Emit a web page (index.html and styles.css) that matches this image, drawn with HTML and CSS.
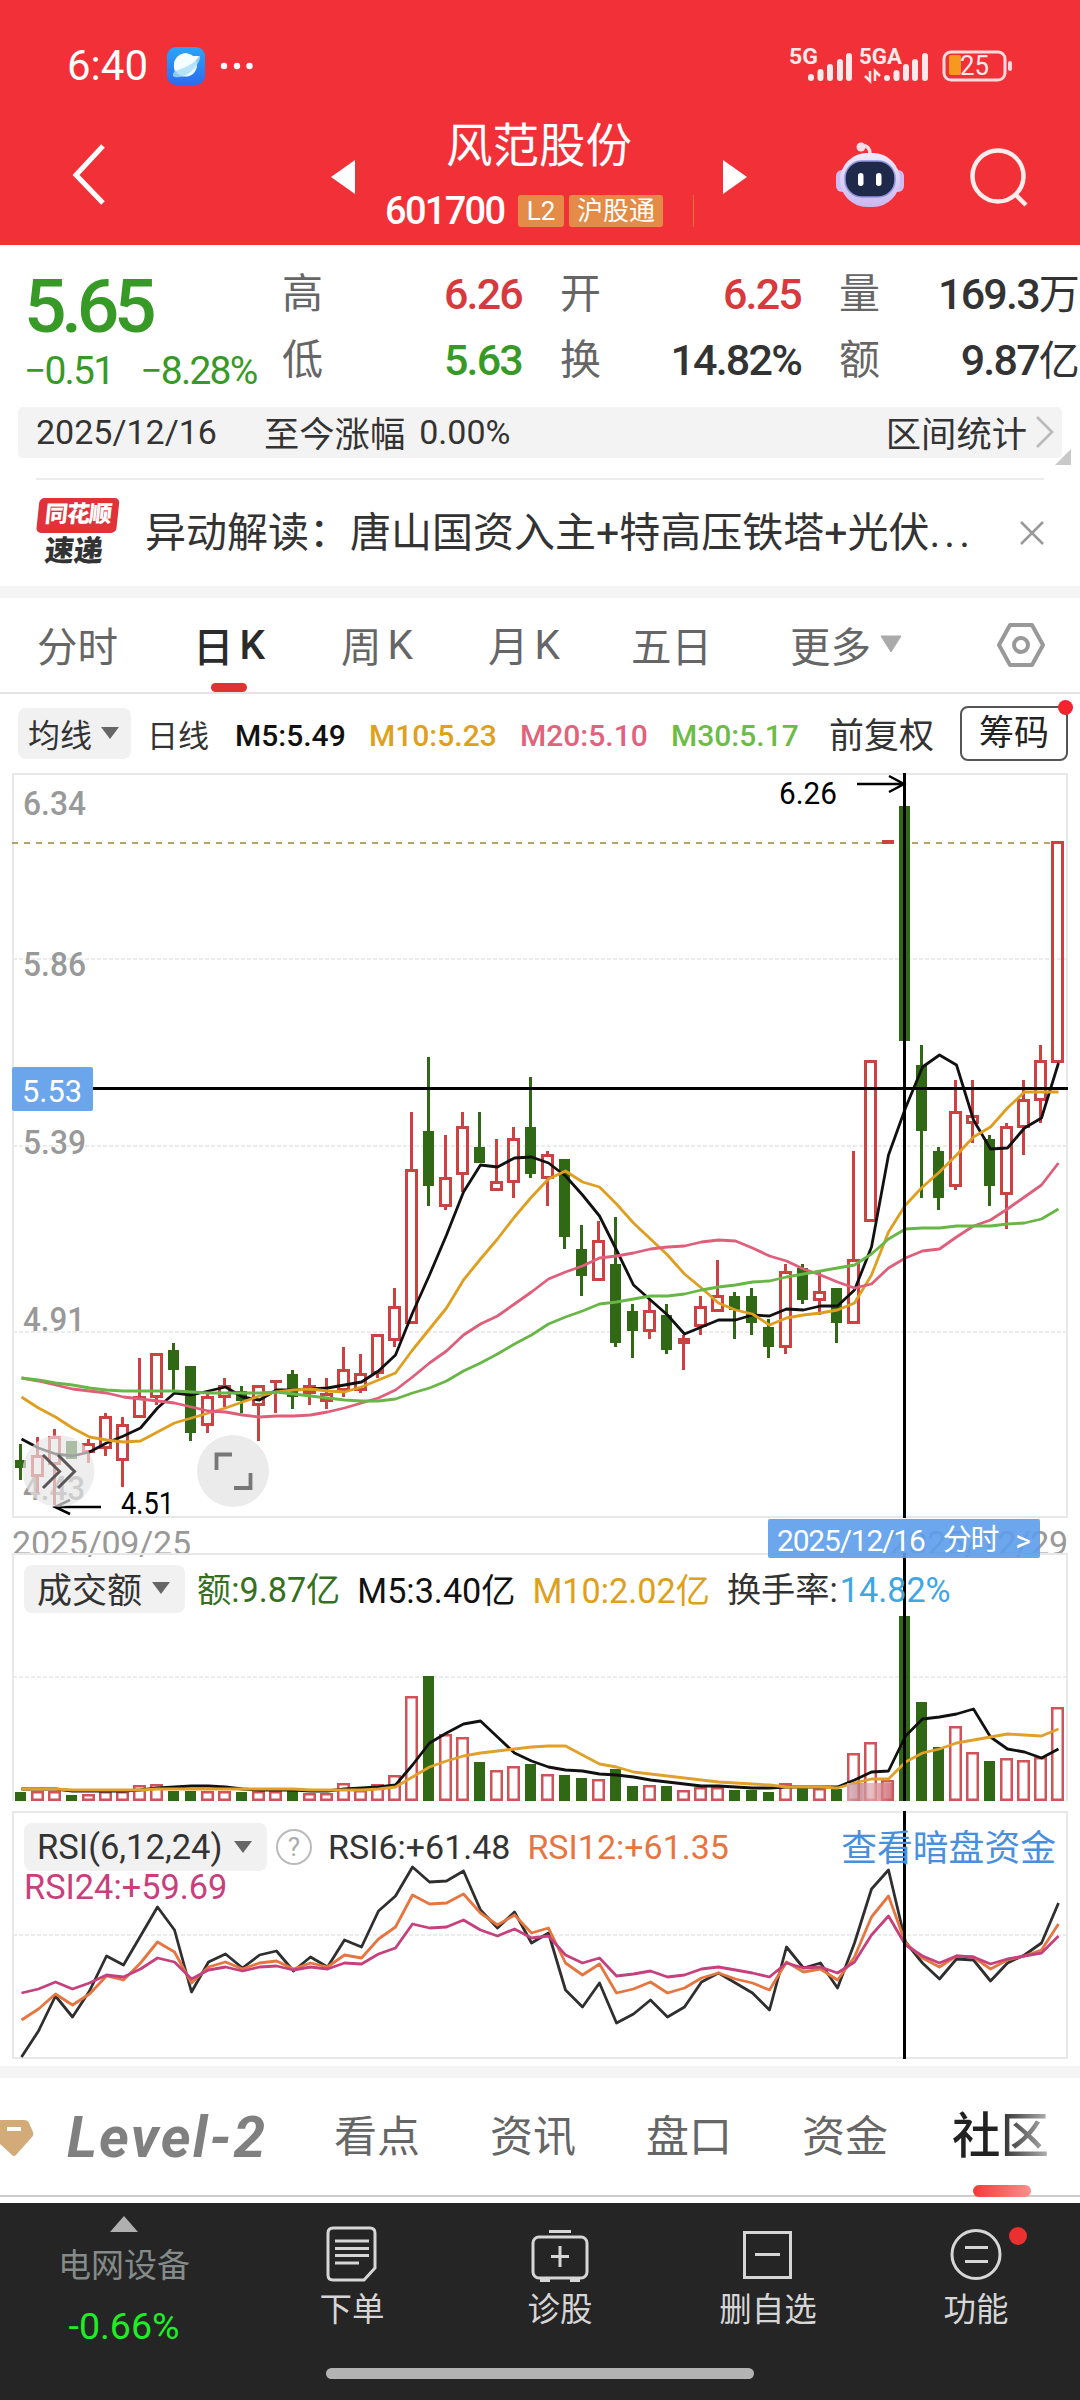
FILE: index.html
```html
<!DOCTYPE html>
<html lang="zh-CN">
<head>
    <meta charset="UTF-8">
    <meta name="viewport" content="width=device-width, initial-scale=1.0">
    <title>风范股份 601700</title>
    <link rel="stylesheet" href="styles.css">
</head>
<body>
<div class="app">
    <header class="header">
        <div class="status">
            <span class="clock">6:40</span>
            <svg class="browser-icon" width="38" height="38" viewBox="0 0 38 38">
                <defs>
                    <linearGradient id="sky" x1="0" y1="0" x2="0" y2="1">
                        <stop offset="0" stop-color="#2aa5f7"/>
                        <stop offset="1" stop-color="#2c6cf0"/>
                    </linearGradient>
                </defs>
                <rect width="38" height="38" rx="9" fill="url(#sky)"/>
                <circle cx="18.5" cy="18" r="11.5" fill="#e9fbff"/>
                <path d="M6 29C4 22 27 8 33 9C34 13 28 22 21 27C15 31 8 31 6 29Z" fill="#a9dcfb" opacity=".8"/>
                <path d="M9 12C12 6 20 4 26 9L32 9C30 14 20 21 8 24C6 20 7 15 9 12Z" fill="#f4feff"/>
            </svg>
            <svg class="dots" width="34" height="8" viewBox="0 0 34 8" fill="#fff">
                <circle cx="4" cy="4" r="3.2"/><circle cx="17" cy="4" r="3.2"/><circle cx="29.5" cy="4" r="3.2"/>
            </svg>
            <svg class="signals" width="226" height="42" viewBox="788 44 226 42">
                <text x="789" y="63" class="net" textLength="29" lengthAdjust="spacingAndGlyphs">5G</text>
                <text x="859" y="63" class="net" textLength="43" lengthAdjust="spacingAndGlyphs">5GA</text>
                <g stroke="#ffe9ea" stroke-width="6" stroke-linecap="round">
                    <path d="M811 76V77M820.5 71V77M830 66V77M840 61V77M849 55V77"/>
                    <path d="M887 77V77M896.5 72V77M906 66V77M915 61V77M925 55V77"/>
                </g>
                <path d="M870 70V80L865 75M875 80V70L880 75" fill="none" stroke="#ffe9ea" stroke-width="2.5"/>
                <rect x="944" y="51" width="61" height="28" rx="7" fill="none" stroke="#ffd9dc" stroke-width="3"/>
                <rect x="949" y="54" width="12" height="20" rx="2" fill="#f59a1f"/>
                <rect x="1008" y="60" width="4" height="10" rx="2" fill="#ffd9dc"/>
                <text x="960" y="74" class="battery" textLength="29" lengthAdjust="spacingAndGlyphs">25</text>
            </svg>
        </div>
        <div class="nav">
            <svg class="back" width="40" height="66" viewBox="0 0 40 66"><path d="M35 4L8 33L35 61" fill="none" stroke="#fff" stroke-width="5"/></svg>
            <svg class="prev" width="24" height="34" viewBox="0 0 24 34"><path d="M24 0V34L0 17Z" fill="#fff"/></svg>
            <div class="title">
                <h1>风范股份</h1>
                <div class="code">
                    <span class="num">601700</span>
                    <span class="badge">L2</span>
                    <span class="badge badge-wide">沪股通</span>
                    <i class="code-line"></i>
                </div>
            </div>
            <svg class="next" width="24" height="34" viewBox="0 0 24 34"><path d="M0 0V34L24 17Z" fill="#fff"/></svg>
            <svg class="robot" width="68" height="66" viewBox="0 0 68 66">
                <defs>
                    <linearGradient id="shell" x1="0" y1="0" x2="0" y2="1">
                        <stop offset="0" stop-color="#f3e9fb"/>
                        <stop offset="1" stop-color="#c9b8f0"/>
                    </linearGradient>
                </defs>
                <path d="M25 4C32 3 34 7 34 12" fill="none" stroke="#f6d9e6" stroke-width="3.5"/>
                <circle cx="25" cy="5" r="4.5" fill="#fbdbe4"/>
                <rect x="0" y="28" width="12" height="22" rx="6" fill="#cdbdf5"/>
                <rect x="56" y="28" width="12" height="22" rx="6" fill="#cdbdf5"/>
                <rect x="4" y="11" width="60" height="54" rx="27" fill="url(#shell)"/>
                <rect x="9" y="19" width="50" height="36" rx="17" fill="#1f2a4a" stroke="#8d94dd" stroke-width="1.5"/>
                <rect x="22" y="31" width="5.5" height="13" rx="2.7" fill="#fff"/>
                <rect x="40" y="31" width="5.5" height="13" rx="2.7" fill="#fff"/>
            </svg>
            <svg class="search" width="60" height="60" viewBox="0 0 60 60" fill="none" stroke="#ffecec" stroke-width="4.5"><circle cx="28" cy="28" r="25.5"/><path d="M45 46L56 57"/></svg>
        </div>
    </header>

    <section class="quote">
        <div class="price-box">
            <div class="price">5.65</div>
            <div class="change"><span>−0.51</span><span>−8.28%</span></div>
        </div>
        <dl class="stats">
            <dt>高</dt><dd class="up">6.26</dd>
            <dt>开</dt><dd class="up">6.25</dd>
            <dt>量</dt><dd>169.3<b>万</b></dd>
            <dt>低</dt><dd class="down">5.63</dd>
            <dt>换</dt><dd>14.82%</dd>
            <dt>额</dt><dd>9.87<b>亿</b></dd>
        </dl>
    </section>

    <div class="range">
        <span class="range-date">2025/12/16</span>
        <span class="range-name">至今涨幅</span>
        <span class="range-value">0.00%</span>
        <span class="range-link">区间统计</span>
        <svg width="22" height="34" viewBox="0 0 22 34"><path d="M4 2L19 17L4 32" fill="none" stroke="#b9b9b9" stroke-width="2.5"/></svg>
        <i class="corner"></i>
    </div>

    <div class="news">
        <div class="news-logo">
            <span class="logo-top">同花顺</span>
            <span class="logo-bottom">速递</span>
        </div>
        <p>异动解读：唐山国资入主+特高压铁塔+光伏<span class="more">...</span></p>
        <svg width="24" height="24" viewBox="0 0 24 24"><path d="M1 1L23 23M23 1L1 23" stroke="#999" stroke-width="2.5"/></svg>
    </div>

    <nav class="periods">
        <span>分时</span>
        <span class="active">日<em>K</em></span>
        <span>周<em>K</em></span>
        <span>月<em>K</em></span>
        <span>五日</span>
        <span>更多<svg width="22" height="18" viewBox="0 0 22 18"><path d="M1 1H21L11 17Z" fill="#aaa" stroke="#aaa" stroke-linejoin="round"/></svg></span>
        <svg class="setting" width="48" height="46" viewBox="0 0 48 46" fill="none" stroke="#999" stroke-width="4" stroke-linejoin="round"><path d="M13 3H35L46 23L35 43H13L2 23Z"/><circle cx="24" cy="23" r="7"/></svg>
    </nav>

    <div class="ma-row">
        <span class="pill">均线<i class="arrow"></i></span>
        <span class="ma-name">日线</span>
        <span class="ma5">M5:5.49</span>
        <span class="ma10">M10:5.23</span>
        <span class="ma20">M20:5.10</span>
        <span class="ma30">M30:5.17</span>
        <span class="adjust">前复权</span>
        <button class="chips">筹码</button>
    </div>

    <section class="panel price-panel">
        <svg id="priceChart" width="1080" height="746" viewBox="0 773 1080 746"></svg>
    </section>

    <div class="dates">
        <span>2025/09/25</span>
        <span>2025/12/29</span>
        <div class="date-tip"><span>2025/12/16</span><span class="tip-name">分时</span><span class="tip-more">&gt;</span></div>
    </div>

    <section class="panel">
        <svg id="volumeChart" width="1080" height="258" viewBox="0 1553 1080 258"></svg>
        <div class="legend legend-volume">
            <span class="pill">成交额<i class="arrow"></i></span>
            <span class="vol">额:9.87亿</span>
            <span class="ma5">M5:3.40亿</span>
            <span class="ma10">M10:2.02亿</span>
            <span class="turnover">换手率:<b>14.82%</b></span>
        </div>
    </section>

    <section class="panel">
        <svg id="rsiChart" width="1080" height="249" viewBox="0 1811 1080 249"></svg>
        <div class="legend legend-rsi">
            <span class="pill">RSI(6,12,24)<i class="arrow"></i></span>
            <span class="help">?</span>
            <span class="rsi6">RSI6:+61.48</span>
            <span class="rsi12">RSI12:+61.35</span>
            <a class="dark-pool">查看暗盘资金</a>
        </div>
        <span class="rsi24">RSI24:+59.69</span>
    </section>

    <nav class="tabs">
        <svg width="34" height="38" viewBox="0 0 34 38"><path d="M-12 1H24Q28 1 29 4L33 13Q34 16 32 18L16 36Q14 38 12 36L-12 14Z" fill="#d3ab78"/><path d="M7 10H21" stroke="#fff" stroke-width="4"/></svg>
        <span class="level2">Level-2</span>
        <span>看点</span>
        <span>资讯</span>
        <span>盘口</span>
        <span>资金</span>
        <span class="current">社区</span>
    </nav>

    <footer class="toolbar">
        <div class="sector">
            <svg width="28" height="16" viewBox="0 0 28 16"><path d="M14 0L28 16H0Z" fill="#b0b0b0"/></svg>
            <span class="sector-name">电网设备</span>
            <span class="sector-change">-0.66%</span>
        </div>
        <div class="tool">
            <svg width="60" height="60" viewBox="0 0 60 60"><path d="M11 4H48Q53 4 53 9V44L42 56H11Q6 56 6 51V9Q6 4 11 4Z"/><path d="M13 17H47M13 24.5H47M13 31.5H47M13 39H37"/></svg>
            <span>下单</span>
        </div>
        <div class="tool">
            <svg width="60" height="60" viewBox="0 0 60 60"><rect x="3" y="13" width="54" height="41" rx="6"/><path d="M19 7.5H41M30 22V43M21 32.5H39M10 56.5H20M40 56.5H50"/></svg>
            <span>诊股</span>
        </div>
        <div class="tool">
            <svg width="60" height="60" viewBox="0 0 60 60"><rect x="6.5" y="8.5" width="46" height="45"/><path d="M17 30.5H42"/></svg>
            <span>删自选</span>
        </div>
        <div class="tool">
            <svg width="60" height="60" viewBox="0 0 60 60"><circle cx="30" cy="30.5" r="24"/><path d="M19 23.5H42M19 37.5H42"/></svg>
            <span>功能</span>
            <i class="red-dot"></i>
        </div>
        <i class="home-bar"></i>
    </footer>
</div>
<script src="chart.js"></script>
</body>
</html>
```

FILE: styles.css
```css
* {
    box-sizing: border-box;
}

body {
    margin: 0;
    background: #fff;
    font-family: Roboto, "Noto Sans CJK SC", sans-serif;
    color: #333;
}

.app {
    width: 1080px;
    height: 2400px;
    overflow: hidden;
    background: #fff;
}

span, dd, dt, p {
    white-space: nowrap;
}

svg {
    display: block;
    flex: none;
}

/* header */
.header {
    height: 245px;
    background: #f13038;
    color: #fff;
}

.status {
    display: flex;
    align-items: center;
    height: 110px;
    padding: 22px 66px 0 67px;
}

.clock {
    width: 100px;
    font-size: 42px;
    line-height: 44px;
}

.dots {
    margin-left: 15px;
}

.signals {
    margin-left: auto;
}

.net {
    font-size: 22px;
    font-weight: 700;
    fill: #ffe9ea;
}

.battery {
    font-size: 27px;
    fill: #ffe9ea;
}

.nav {
    display: grid;
    grid-template-columns: 331px 24px 368px 24px 89px 134px 110px;
    height: 135px;
}

.back {
    margin: 32px 0 0 68px;
}

.prev, .next {
    margin-top: 50px;
}

.title {
    text-align: center;
}

h1 {
    margin: 10px 0 0 0;
    font-size: 46.5px;
    line-height: 52px;
    font-weight: 400;
}

.code {
    display: flex;
    align-items: center;
    height: 32px;
    margin: 23px 0 0 30px;
}

.num {
    width: 133px;
    text-align: left;
    font-size: 38px;
    font-weight: 500;
    letter-spacing: -1.7px;
}

.badge {
    width: 46px;
    height: 32px;
    margin-right: 5px;
    border-radius: 3px;
    background: #e38b47;
    font-size: 26px;
    line-height: 32px;
}

.badge-wide {
    width: 94px;
}

.code-line {
    width: 1px;
    height: 32px;
    margin-left: 25px;
    background: #e3703f;
}

.robot {
    grid-column: 6;
    margin-top: 32px;
}

.search {
    margin-top: 38px;
}

/* quote */
.quote {
    display: grid;
    grid-template-columns: 282px 798px;
    height: 162px;
}

.price-box {
    padding: 19px 0 0 24px;
    color: #379a26;
}

.price {
    height: 84px;
    font-size: 75px;
    line-height: 84px;
    font-weight: 500;
    letter-spacing: -5.4px;
}

.change {
    display: flex;
    gap: 27px;
    margin-top: 1px;
    font-size: 39px;
    line-height: 44px;
    letter-spacing: -1.8px;
}

.stats {
    display: grid;
    grid-template-columns: 60px 180px 38px 60px 181px 38px 60px 179px;
    grid-template-rows: 66px 66px;
    align-items: center;
    margin: 16px 0 0 0;
    font-size: 43px;
}

.stats dt {
    color: #666;
    font-size: 41px;
    line-height: 66px;
}

.stats dt:nth-of-type(2), .stats dt:nth-of-type(5) {
    grid-column: 4;
}

.stats dt:nth-of-type(3), .stats dt:nth-of-type(6) {
    grid-column: 7;
}

.stats dd {
    margin: 0;
    text-align: right;
    font-weight: 500;
    line-height: 66px;
    letter-spacing: -1.8px;
}

.stats b {
    font-size: 41px;
    font-weight: 400;
}

.up {
    color: #d8393c;
}

.down {
    color: #379a26;
}

.range {
    position: relative;
    display: flex;
    align-items: center;
    height: 51px;
    margin: 0 18px;
    padding: 0 0 2px 18px;
    border-radius: 5px;
    background: #f3f3f3;
    font-size: 34px;
}

.range-date {
    width: 228px;
}

.range-name, .range-link {
    font-size: 35.3px;
}

.range-value {
    margin-left: 14px;
}

.range-link {
    margin: 0 6px 0 auto;
}

.range svg {
    margin-right: 7px;
}

.corner {
    position: absolute;
    right: -9px;
    bottom: -7px;
    border-left: 16px solid transparent;
    border-bottom: 16px solid #c9c9c9;
}

.news {
    display: flex;
    align-items: center;
    height: 108px;
    margin: 20px 36px 0;
    border-top: 2px solid #ececec;
}

.news-logo {
    width: 80px;
    height: 70px;
    margin-right: 29px;
    text-align: center;
    font-weight: 900;
    transform: skewX(-6deg);
}

.logo-top {
    display: block;
    height: 35px;
    border-radius: 5px;
    background: #e13139;
    color: #fff;
    font-size: 23px;
    line-height: 34px;
    letter-spacing: -1px;
}

.logo-bottom {
    display: block;
    font-size: 29px;
    line-height: 36px;
}

.news p {
    margin: 0;
    font-size: 41px;
    line-height: 60px;
}

.more {
    letter-spacing: 4px;
}

.news svg {
    margin-left: auto;
}

/* period tabs */
.periods {
    display: grid;
    grid-template-columns: 156px 148px 147px 143px 159px 207px 48px;
    align-items: center;
    height: 108px;
    padding-left: 37px;
    border-top: 12px solid #f4f4f4;
    border-bottom: 2px solid #e3e3e3;
    color: #666;
    font-size: 40.5px;
}

.periods span {
    display: flex;
    align-items: center;
    position: relative;
    height: 94px;
    padding-bottom: 2px;
}

.periods em {
    margin-left: 6px;
    padding-top: 2px;
    font-style: normal;
}

.periods span svg {
    margin-left: 9px;
}

.periods .active {
    color: #2b2b2b;
    font-weight: 500;
}

.active::after {
    content: "";
    position: absolute;
    left: 18px;
    bottom: 0;
    width: 36px;
    height: 9px;
    border-radius: 5px;
    background: #e0322f;
}

/* indicator row */
.ma-row {
    display: grid;
    grid-template-columns: 129px 88px 134px 151px 151px 158px 132px 107px;
    align-items: center;
    height: 79px;
    padding-left: 18px;
    font-size: 30px;
    font-weight: 500;
}

.ma5, .ma10, .ma20, .ma30 {
    padding-top: 3px;
}

.pill {
    display: flex;
    align-items: center;
    justify-content: space-between;
    border-radius: 8px;
    background: #f1f1f1;
    font-weight: 400;
}

.ma-row .pill {
    width: 113px;
    height: 51px;
    padding: 0 12px 2px 10px;
    font-size: 32px;
}

.arrow {
    border: 9px solid transparent;
    border-top: 12px solid #666;
    border-bottom: 0;
}

.ma-name {
    font-size: 31px;
    font-weight: 400;
}

.ma5 {
    color: #111;
}

.ma10 {
    color: #dfa01c;
}

.ma20 {
    color: #e2627b;
}

.ma30 {
    color: #6cbd45;
}

.adjust {
    padding-bottom: 3px;
    font-size: 35px;
    font-weight: 400;
}

.chips {
    position: relative;
    width: 108px;
    height: 55px;
    margin-left: -1px;
    padding: 0;
    border: 2px solid #555;
    border-radius: 8px;
    background: #fff;
    color: #222;
    font-family: inherit;
    font-size: 35px;
    line-height: 48px;
}

.chips::after {
    content: "";
    position: absolute;
    right: -7px;
    top: -8px;
    width: 15px;
    height: 15px;
    border-radius: 50%;
    background: #f4242f;
}

/* charts */
.panel {
    position: relative;
}

.panel svg {
    overflow: visible;
}

.axis {
    font-size: 34px;
    font-weight: 500;
    fill: #999;
}

.mark {
    font-size: 31px;
    fill: #000;
}

.mark-light {
    fill: #fff;
}

.dates {
    position: relative;
    display: flex;
    justify-content: space-between;
    height: 34px;
    padding: 6px 12px 0 12px;
    color: #999;
    font-size: 34px;
    line-height: 36px;
    letter-spacing: -0.2px;
}

.date-tip {
    position: absolute;
    z-index: 2;
    left: 768px;
    top: 0;
    display: flex;
    width: 272px;
    height: 39px;
    padding: 2px 9px 0;
    border-radius: 2px;
    background: rgba(92, 156, 235, 0.9);
    color: #fff;
    font-size: 30px;
    line-height: 40px;
    letter-spacing: -1.2px;
}

.tip-name {
    margin-left: 18px;
    font-size: 29px;
    line-height: 38px;
}

.tip-more {
    margin-left: 17px;
}

.legend {
    position: absolute;
    left: 24px;
    display: flex;
    align-items: center;
    width: 1032px;
    height: 48px;
    font-size: 34px;
    font-weight: 500;
}

.legend-volume {
    top: 12px;
}

.legend-rsi {
    top: 12px;
}

.legend .pill {
    height: 48px;
    padding: 0 15px 3px 13px;
    font-size: 35px;
}

.legend-volume .pill {
    width: 161px;
    margin-right: 12px;
}

.legend-volume > span:not(.pill) {
    padding-bottom: 5px;
    margin-right: 17px;
    font-size: 34.2px;
    font-weight: 400;
}

.vol {
    color: #36701e;
}

.turnover b {
    margin-left: 2px;
    color: #3ea6e3;
    font-weight: 400;
}

.legend-rsi .pill {
    width: 243px;
    margin-right: 9px;
    padding-bottom: 0;
    font-size: 34.5px;
}

.legend-rsi span {
    font-weight: 400;
}

.help {
    width: 36px;
    height: 36px;
    margin-right: 16px;
    border: 2px solid #bbb;
    border-radius: 50%;
    color: #aaa;
    font-size: 26px;
    line-height: 32px;
    text-align: center;
}

.rsi12 {
    margin-left: 17px;
    color: #e8743f;
}

.dark-pool {
    margin-left: auto;
    padding-bottom: 4px;
    color: #4a8fde;
    font-size: 35.8px;
    font-weight: 400;
}

.rsi24 {
    position: absolute;
    left: 24px;
    top: 56px;
    color: #c83f7c;
    font-size: 34.3px;
    line-height: 40px;
}

/* content tabs */
.tabs {
    display: grid;
    grid-template-columns: 67px 267px 156px 156px 156px 150px 128px;
    align-items: center;
    height: 137px;
    margin-top: 6px;
    border-top: 12px solid #f4f4f4;
    border-bottom: 6px solid #fff;
    box-shadow: inset 0 -2px 0 #ccc;
    color: #666;
    font-size: 43px;
}

.tabs span {
    position: relative;
    height: 119px;
    line-height: 118px;
}

.tabs .level2 {
    color: #808080;
    font-size: 57px;
    line-height: 120px;
    font-weight: 700;
    font-style: italic;
    letter-spacing: 2.2px;
}

.tabs .current {
    width: 100px;
    background: linear-gradient(90deg, #222 45%, #bbb 100%);
    -webkit-background-clip: text;
    background-clip: text;
    color: transparent;
    font-size: 48.5px;
    font-weight: 500;
}

.current::after {
    content: "";
    position: absolute;
    left: 21px;
    bottom: 0;
    width: 58px;
    height: 12px;
    border-radius: 6px;
    background: linear-gradient(90deg, #f9383a, #fa8f8d);
}

/* bottom toolbar */
.toolbar {
    position: relative;
    display: grid;
    grid-template-columns: 248px 208px 208px 208px 208px;
    height: 197px;
    background: #252525;
    color: #d6d6d6;
}

.sector, .tool {
    position: relative;
    display: flex;
    flex-direction: column;
    align-items: center;
}

.sector {
    padding-top: 13px;
}

.sector-name {
    margin-top: 15px;
    color: #848b89;
    font-size: 33px;
    line-height: 38px;
}

.sector-change {
    margin-top: 21px;
    color: #1fee25;
    font-size: 37.5px;
    line-height: 40px;
}

.tool {
    padding-top: 21px;
}

.tool svg {
    fill: none;
    stroke: #d6d6d6;
    stroke-width: 3;
}

.tool span {
    margin-top: 6px;
    font-size: 32.5px;
    line-height: 40px;
}

.red-dot {
    position: absolute;
    left: 137px;
    top: 24px;
    width: 18px;
    height: 18px;
    border-radius: 50%;
    background: #ec2f2f;
}

.home-bar {
    position: absolute;
    left: 326px;
    top: 165px;
    width: 428px;
    height: 11px;
    border-radius: 6px;
    background: #b3b3b3;
}
```

FILE: chart.js
```js
const RED = '#cc4142';
const GREEN = '#316815';
const STEP = 17;
const START = 20.5;

// [color, high, bodyTop, bodyBottom, low]
const candles = [
    ['g', 1444, 1460, 1468, 1480], ['r', 1437, 1455, 1477, 1493], ['r', 1429, 1436, 1465, 1505], ['g', 1441, 1441, 1459, 1459],
    ['r', 1439, 1443, 1453, 1463], ['r', 1413, 1416, 1449, 1456], ['r', 1417, 1424, 1461, 1487], ['r', 1358, 1396, 1418, 1418],
    ['r', 1353, 1353, 1398, 1405], ['g', 1343, 1350, 1370, 1390], ['g', 1366, 1366, 1433, 1441], ['r', 1394, 1396, 1426, 1433],
    ['r', 1378, 1385, 1398, 1407], ['g', 1386, 1391, 1401, 1413], ['r', 1385, 1385, 1406, 1441], ['r', 1380, 1380, 1383, 1413],
    ['g', 1370, 1374, 1397, 1409], ['r', 1378, 1385, 1394, 1405], ['r', 1378, 1393, 1402, 1409], ['r', 1347, 1369, 1391, 1397],
    ['r', 1354, 1373, 1391, 1393], ['r', 1334, 1334, 1374, 1378], ['r', 1288, 1306, 1341, 1347], ['r', 1112, 1169, 1324, 1324],
    ['g', 1057, 1131, 1186, 1206], ['r', 1135, 1177, 1207, 1210], ['r', 1112, 1126, 1175, 1192], ['g', 1112, 1147, 1163, 1163],
    ['r', 1139, 1181, 1191, 1191], ['r', 1127, 1138, 1183, 1198], ['g', 1077, 1127, 1174, 1178], ['r', 1151, 1154, 1179, 1206],
    ['g', 1159, 1159, 1237, 1249], ['g', 1225, 1249, 1276, 1296], ['r', 1221, 1240, 1281, 1281], ['g', 1217, 1264, 1343, 1347],
    ['g', 1304, 1311, 1331, 1358], ['r', 1300, 1310, 1332, 1339], ['g', 1304, 1315, 1350, 1354], ['r', 1335, 1338, 1344, 1370],
    ['r', 1296, 1306, 1327, 1335], ['r', 1260, 1295, 1312, 1312], ['g', 1292, 1296, 1310, 1339], ['g', 1288, 1296, 1323, 1335],
    ['g', 1319, 1327, 1347, 1358], ['r', 1264, 1271, 1348, 1354], ['g', 1264, 1268, 1300, 1304], ['r', 1272, 1291, 1301, 1315],
    ['g', 1288, 1288, 1323, 1343], ['r', 1151, 1259, 1324, 1324], ['r', 1060, 1060, 1222, 1222], ['r', 840, 840, 844, 844],
    ['g', 806, 806, 1041, 1041], ['g', 1045, 1065, 1131, 1198], ['g', 1147, 1151, 1198, 1210], ['r', 1080, 1111, 1187, 1190],
    ['r', 1080, 1115, 1124, 1143], ['g', 1135, 1139, 1186, 1206], ['r', 1123, 1126, 1195, 1229], ['r', 1080, 1099, 1128, 1155],
    ['r', 1045, 1060, 1101, 1123], ['r', 841, 841, 1063, 1063]
];

const ma5 = [1439, 1448, 1454, 1456, 1452, 1443, 1436, 1428, 1408, 1393, 1395, 1391, 1387, 1397, 1400, 1390, 1390, 1389, 1388, 1385, 1382, 1371, 1355, 1313, 1275, 1235, 1192, 1165, 1167, 1158, 1157, 1163, 1176, 1195, 1216, 1250, 1285, 1300, 1315, 1334, 1327, 1320, 1320, 1315, 1316, 1309, 1310, 1306, 1306, 1290, 1247, 1155, 1108, 1067, 1055, 1065, 1120, 1149, 1148, 1128, 1118, 1063];
const ma10 = [1397, 1408, 1417, 1428, 1437, 1440, 1442, 1441, 1432, 1423, 1418, 1413, 1408, 1402, 1396, 1392, 1390, 1389, 1391, 1392, 1387, 1380, 1373, 1350, 1329, 1308, 1280, 1259, 1239, 1217, 1197, 1179, 1171, 1182, 1187, 1204, 1223, 1239, 1255, 1274, 1288, 1303, 1310, 1314, 1325, 1318, 1315, 1313, 1310, 1303, 1275, 1232, 1205, 1187, 1172, 1155, 1137, 1127, 1108, 1092, 1092, 1092];
const ma20 = [1378, 1381, 1385, 1389, 1391, 1393, 1397, 1399, 1401, 1403, 1407, 1411, 1412, 1415, 1417, 1416, 1416, 1415, 1412, 1408, 1403, 1398, 1390, 1377, 1363, 1351, 1335, 1324, 1316, 1304, 1292, 1279, 1272, 1266, 1258, 1256, 1253, 1249, 1247, 1246, 1242, 1240, 1241, 1248, 1256, 1261, 1269, 1275, 1282, 1288, 1284, 1268, 1258, 1251, 1249, 1237, 1226, 1220, 1209, 1197, 1185, 1163];
const ma30 = [1378, 1380, 1383, 1385, 1388, 1390, 1391, 1391, 1391, 1391, 1392, 1393, 1393, 1393, 1393, 1392, 1394, 1396, 1398, 1400, 1401, 1401, 1399, 1393, 1388, 1381, 1371, 1363, 1354, 1344, 1335, 1324, 1317, 1311, 1304, 1302, 1299, 1296, 1296, 1294, 1290, 1287, 1285, 1282, 1281, 1277, 1274, 1271, 1268, 1265, 1254, 1239, 1229, 1228, 1228, 1226, 1226, 1226, 1224, 1223, 1219, 1209];

const volumes = [1792, 1791, 1791, 1795, 1794, 1791, 1791, 1785, 1784, 1791, 1791, 1791, 1791, 1792, 1791, 1791, 1791, 1793, 1793, 1783, 1790, 1784, 1775, 1696, 1676, 1734, 1737, 1762, 1770, 1766, 1764, 1774, 1775, 1778, 1779, 1769, 1786, 1785, 1786, 1790, 1787, 1787, 1790, 1790, 1792, 1783, 1788, 1788, 1789, 1753, 1742, 1780, 1616, 1702, 1747, 1726, 1752, 1761, 1758, 1760, 1757, 1707];
const volMa5 = [1789, 1789, 1789, 1791, 1791, 1791, 1791, 1790, 1788, 1787, 1786, 1786, 1787, 1789, 1790, 1790, 1790, 1791, 1791, 1789, 1788, 1787, 1785, 1765, 1743, 1733, 1724, 1721, 1737, 1753, 1761, 1767, 1770, 1771, 1774, 1775, 1777, 1780, 1782, 1784, 1786, 1786, 1787, 1788, 1788, 1787, 1787, 1787, 1787, 1780, 1772, 1771, 1736, 1719, 1717, 1714, 1709, 1737, 1749, 1752, 1758, 1749];
const volMa10 = [1789, 1789, 1789, 1790, 1790, 1790, 1790, 1790, 1789, 1789, 1789, 1789, 1789, 1789, 1789, 1789, 1789, 1790, 1790, 1790, 1790, 1789, 1787, 1777, 1767, 1761, 1756, 1753, 1751, 1749, 1747, 1746, 1746, 1755, 1764, 1767, 1772, 1774, 1776, 1778, 1780, 1782, 1783, 1784, 1785, 1787, 1787, 1787, 1788, 1783, 1779, 1779, 1762, 1753, 1749, 1743, 1740, 1737, 1734, 1735, 1736, 1729];

const rsi6 = [2057, 2031, 1996, 2017, 1991, 1956, 1965, 1936, 1907, 1930, 1992, 1962, 1954, 1968, 1955, 1951, 1971, 1957, 1967, 1940, 1947, 1911, 1896, 1867, 1882, 1881, 1871, 1910, 1928, 1912, 1943, 1933, 1990, 2007, 1983, 2023, 2014, 2000, 2017, 2007, 1982, 1973, 1983, 1993, 2010, 1947, 1968, 1963, 1988, 1943, 1889, 1870, 1942, 1963, 1979, 1959, 1960, 1981, 1963, 1955, 1943, 1903];
const rsi12 = [2020, 2009, 1994, 2005, 1994, 1976, 1980, 1963, 1942, 1952, 1983, 1967, 1962, 1969, 1963, 1961, 1969, 1963, 1967, 1955, 1958, 1939, 1927, 1895, 1904, 1903, 1894, 1913, 1925, 1915, 1933, 1928, 1963, 1975, 1964, 1993, 1989, 1982, 1993, 1988, 1978, 1973, 1979, 1983, 1990, 1962, 1972, 1969, 1980, 1957, 1917, 1896, 1943, 1958, 1967, 1956, 1957, 1969, 1960, 1956, 1950, 1924];
const rsi24 = [1993, 1989, 1982, 1989, 1983, 1975, 1977, 1969, 1958, 1962, 1979, 1970, 1967, 1971, 1967, 1966, 1970, 1967, 1969, 1963, 1964, 1954, 1948, 1924, 1928, 1927, 1920, 1930, 1936, 1929, 1938, 1936, 1955, 1963, 1958, 1976, 1974, 1971, 1977, 1975, 1969, 1967, 1970, 1973, 1977, 1963, 1968, 1967, 1973, 1962, 1935, 1916, 1945, 1956, 1963, 1956, 1957, 1964, 1959, 1956, 1953, 1936];

function xAt(i) {
    return START + STEP * i;
}

function curve(values, color) {
    const points = values.map((y, i) => `${xAt(i) + 1},${y}`).join(' ');
    return `<polyline points="${points}" fill="none" stroke="${color}" stroke-width="2.8" stroke-linejoin="round"/>`;
}

function line(x1, y1, x2, y2, color, width, dash) {
    return `<line x1="${x1}" y1="${y1}" x2="${x2}" y2="${y2}" stroke="${color}" stroke-width="${width}" ${dash ? `stroke-dasharray="${dash}"` : ''}/>`;
}

function label(x, y, text, width, cls) {
    return `<text x="${x}" y="${y}" class="${cls}" textLength="${width}" lengthAdjust="spacingAndGlyphs">${text}</text>`;
}

function candle([type, high, top, bottom, low], i) {
    const x = xAt(i);
    if (type === 'g') {
        return line(x, high, x, low, GREEN, 3) + `<rect x="${x - 5.5}" y="${top}" width="11" height="${bottom - top}" fill="${GREEN}"/>`;
    }
    // flat bars have no hollow body
    if (bottom - top < 7) {
        return line(x, high, x, low, RED, 3) + `<rect x="${x - 5.5}" y="${top}" width="12" height="${bottom - top}" fill="${RED}"/>`;
    }
    return line(x, high, x, top, RED, 3) + line(x, bottom, x, low, RED, 3) +
        `<rect x="${x - 5}" y="${top + 1.5}" width="10" height="${bottom - top - 3}" fill="none" stroke="${RED}" stroke-width="3"/>`;
}

function volumeBar(top, i) {
    const x = xAt(i);
    if (candles[i][0] === 'g') {
        return `<rect x="${x - 5.5}" y="${top}" width="11" height="${1801 - top}" fill="${GREEN}"/>`;
    }
    return `<rect x="${x - 5.25}" y="${top + 1.25}" width="10.5" height="${1801 - top - 2.5}" fill="none" stroke="#cf5358" stroke-width="2.5"/>`;
}

function drawPrice() {
    let out = '<rect x="13" y="774" width="1054" height="743" fill="none" stroke="#e8e8e8" stroke-width="2"/>';
    [959, 1146, 1332].forEach((y) => out += line(13, y, 1067, y, '#e6e6e6', 1.5, '4 2'));
    out += line(12, 843, 1067, 843, '#b8a267', 2, '6 6');
    out += label(23, 815, '6.34', 63, 'axis') + label(23, 976, '5.86', 63, 'axis') + label(23, 1154, '5.39', 63, 'axis');
    out += label(23, 1331, '4.91', 62, 'axis') + label(23, 1500, '4.43', 62, 'axis');
    out += candles.map(candle).join('');
    out += curve(ma5, '#111') + curve(ma10, '#e09e1e') + curve(ma20, '#df5f7b') + curve(ma30, '#68b645');
    out += label(779, 804, '6.26', 58, 'mark') + label(121, 1514, '4.51', 53, 'mark');
    out += '<path d="M857 784H904M889 776L904 784L889 792M101 1507H55M70 1500L55 1507L70 1514" fill="none" stroke="#000" stroke-width="2.5"/>';
    // crosshair
    out += line(12, 1088.5, 1068, 1088.5, '#000', 3) + line(904.5, 773, 904.5, 1518, '#000', 3);
    out += '<rect x="12" y="1067" width="81" height="44" rx="2" fill="#6ba5ec"/>' + label(22, 1102, '5.53', 60, 'mark mark-light');
    // floating buttons
    out += '<circle cx="58.5" cy="1471" r="36" fill="#e6e6e6" fill-opacity=".68"/><circle cx="233" cy="1471" r="36" fill="#ebebeb"/>';
    out += '<path d="M43 1455L59.5 1471.5L43 1488M58 1455L74.5 1471.5L58 1488" fill="none" stroke="#5a5557" stroke-width="3"/>';
    out += '<path d="M216.5 1470V1454.5H232M250.5 1473V1488H234" fill="none" stroke="#777" stroke-width="3.8"/>';
    document.getElementById('priceChart').innerHTML = out;
}

function drawVolume() {
    let out = '<path d="M13 1801V1554H1067V1801" fill="none" stroke="#e8e8e8" stroke-width="2"/>';
    out += line(13, 1677, 1067, 1677, '#e6e6e6', 1.5, '4 2') + line(13, 1801, 1067, 1801, '#ededed', 1);
    out += volumes.map(volumeBar).join('');
    out += curve(volMa5, '#111') + curve(volMa10, '#e0a02a');
    out += '<defs><linearGradient id="smear"><stop offset="0" stop-color="#d8aeb6"/><stop offset=".3" stop-color="#c08088"/><stop offset=".5" stop-color="#e0b4b8"/><stop offset="1" stop-color="#cf5560"/></linearGradient></defs>';
    out += '<rect x="847" y="1783" width="46" height="18" fill="url(#smear)" opacity=".8"/>';
    out += line(904.5, 1553, 904.5, 1801, '#000', 3);
    document.getElementById('volumeChart').innerHTML = out;
}

function drawRsi() {
    let out = '<rect x="13" y="1812" width="1054" height="246" fill="none" stroke="#e8e8e8" stroke-width="2"/>';
    out += line(13, 1935, 1067, 1935, '#e6e6e6', 1.5, '4 2');
    out += curve(rsi6, '#2f2f2f') + curve(rsi12, '#e6753f') + curve(rsi24, '#c5407c');
    out += line(904.5, 1811, 904.5, 2059, '#000', 3);
    document.getElementById('rsiChart').innerHTML = out;
}

drawPrice();
drawVolume();
drawRsi();
```
